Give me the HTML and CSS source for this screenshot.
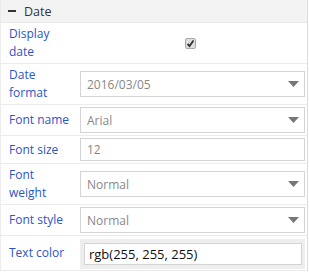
FILE: index.html
```html
<!DOCTYPE html>
<html lang="en">
<head>
    <meta charset="UTF-8">
    <title>Date properties</title>
    <link rel="stylesheet" href="styles.css">
</head>
<body>
    <div class="panel">
        <div class="panel-head">
            <span class="collapse-icon"></span>
            <span class="panel-title">Date</span>
        </div>

        <div class="prop-grid">
            <div class="prop-label">Display<br>date</div>
            <div class="prop-value center">
                <span class="check">
                    <svg width="9" height="9" viewBox="0 0 9 9"><path d="M1.5 5 L3.5 7 L7.5 1.5" fill="none" stroke="#333" stroke-width="1.8"/></svg>
                </span>
            </div>

            <div class="prop-label">Date<br>format</div>
            <div class="prop-value">
                <div class="select">
                    <span>2016/03/05</span>
                    <svg class="caret" width="11" height="6" viewBox="0 0 11 6"><path d="M0 0 H11 L5.5 6 Z" fill="#777"/></svg>
                </div>
            </div>

            <div class="prop-label">Font name</div>
            <div class="prop-value">
                <div class="select">
                    <span>Arial</span>
                    <svg class="caret" width="11" height="6" viewBox="0 0 11 6"><path d="M0 0 H11 L5.5 6 Z" fill="#777"/></svg>
                </div>
            </div>

            <div class="prop-label">Font size</div>
            <div class="prop-value">
                <div class="textbox">12</div>
            </div>

            <div class="prop-label">Font<br>weight</div>
            <div class="prop-value">
                <div class="select">
                    <span>Normal</span>
                    <svg class="caret" width="11" height="6" viewBox="0 0 11 6"><path d="M0 0 H11 L5.5 6 Z" fill="#777"/></svg>
                </div>
            </div>

            <div class="prop-label">Font style</div>
            <div class="prop-value">
                <div class="select">
                    <span>Normal</span>
                    <svg class="caret" width="11" height="6" viewBox="0 0 11 6"><path d="M0 0 H11 L5.5 6 Z" fill="#777"/></svg>
                </div>
            </div>

            <div class="prop-label">Text color</div>
            <div class="prop-value color-cell">
                <div class="color-box">
                    <input class="color-input" type="text" value="rgb(255, 255, 255)">
                </div>
            </div>
        </div>
    </div>
</body>
</html>
```

FILE: styles.css
```css
body {
    margin: 0;
    background-color: #fff;
    font-family: 'Open Sans', 'Noto Sans', sans-serif;
    font-size: 12px;
}
.panel {
    width: 308px;
    box-sizing: border-box;
    border-left: 1px solid #ececec;
    border-right: 1px solid #dcdcdc;
}
.panel-head {
    display: flex;
    align-items: center;
    height: 22px;
    padding-left: 7px;
    background-color: #f3f3f3;
    border-bottom: 1px solid #e8e8e8;
    color: #333;
    font-size: 12.5px;
}
.collapse-icon {
    width: 8px;
    height: 2px;
    background-color: #333;
    margin-right: 8px;
}
.prop-grid {
    display: grid;
    grid-template-columns: 75px 1fr;
}
.prop-label, .prop-value {
    border-bottom: 1px solid #ebebeb;
    padding: 2px 0;
    display: flex;
    align-items: center;
}
.prop-label {
    color: #2a56c6;
    line-height: 18px;
    padding-left: 8px;
}
.prop-value {
    padding-left: 4px;
    padding-right: 2px;
}
.prop-value.center {
    justify-content: center;
}
.check {
    width: 11px;
    height: 11px;
    box-sizing: border-box;
    border: 1px solid #a9a9a9;
    border-radius: 2px;
    background-color: #dedede;
    display: flex;
    align-items: center;
    justify-content: center;
    margin-right: 4px;
}
.select, .textbox {
    flex: 1;
    display: flex;
    align-items: center;
    justify-content: space-between;
    box-sizing: border-box;
    border: 1px solid #d4d4d4;
    padding: 0 5px 0 6px;
    color: #888;
}
.select {
    height: 26px;
}
.textbox {
    height: 23px;
}
.color-cell {
    padding: 3px 2px 1px 4px;
}
.color-box {
    flex: 1;
    display: flex;
    background-color: #eeeeee;
    padding: 4px 3px 4px 4px;
}
.color-input {
    flex: 1;
    min-width: 0;
    height: 22px;
    box-sizing: border-box;
    border: 1px solid #d4d4d4;
    padding: 0 4px;
    font-family: 'Open Sans', 'Noto Sans', sans-serif;
    font-size: 13px;
    color: #111;
    background-color: #fff;
    outline: none;
}
```
